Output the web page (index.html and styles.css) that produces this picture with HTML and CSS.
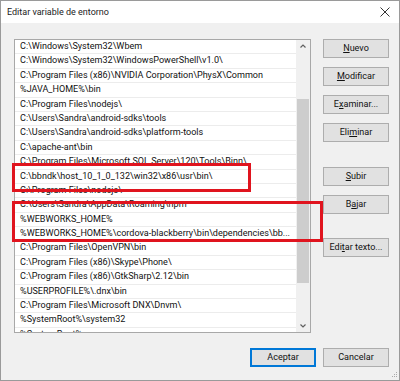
FILE: index.html
```html
<!DOCTYPE html>
<html lang="es">
<head>
<meta charset="utf-8">
<title>Editar variable de entorno</title>
<link rel="stylesheet" href="styles.css">
</head>
<body>
<div class="window">
  <div class="titlebar">
    <span class="title">Editar variable de entorno</span>
    <svg class="close" width="10" height="10" viewBox="0 0 10 10"><path d="M0.5 0.5 L9.5 9.5 M9.5 0.5 L0.5 9.5" stroke="#333" stroke-width="1" fill="none"/></svg>
  </div>
  <div class="content">
    <div class="main">
      <div class="list">
        <div class="rows">
          <div class="row">C:\Windows\System32\Wbem</div>
          <div class="row">C:\Windows\System32\WindowsPowerShell\v1.0\</div>
          <div class="row">C:\Program Files (x86)\NVIDIA Corporation\PhysX\Common</div>
          <div class="row">%JAVA_HOME%\bin</div>
          <div class="row">C:\Program Files\nodejs\</div>
          <div class="row">C:\Users\Sandra\android-sdks\tools</div>
          <div class="row">C:\Users\Sandra\android-sdks\platform-tools</div>
          <div class="row">C:\apache-ant\bin</div>
          <div class="row">C:\Program Files\Microsoft SQL Server\120\Tools\Binn\</div>
          <div class="row">C:\bbndk\host_10_1_0_132\win32\x86\usr\bin\</div>
          <div class="row">C:\Program Files\nodejs\</div>
          <div class="row">C:\Users\Sandra\AppData\Roaming\npm</div>
          <div class="row">%WEBWORKS_HOME%</div>
          <div class="row">%WEBWORKS_HOME%\cordova-blackberry\bin\dependencies\bb...</div>
          <div class="row">C:\Program Files\OpenVPN\bin</div>
          <div class="row">C:\Program Files (x86)\Skype\Phone\</div>
          <div class="row">C:\Program Files (x86)\GtkSharp\2.12\bin</div>
          <div class="row">%USERPROFILE%\.dnx\bin</div>
          <div class="row">C:\Program Files\Microsoft DNX\Dnvm\</div>
          <div class="row">%SystemRoot%\system32</div>
          <div class="row">%SystemRoot%</div>
        </div>
        <div class="scrollbar">
          <svg class="arrow" width="14" height="12" viewBox="0 0 14 12"><path d="M4.5 7.5 L7 5 L9.5 7.5" stroke="#606060" stroke-width="1.2" fill="none"/></svg>
          <div class="track"><div class="thumb"></div></div>
          <svg class="arrow" width="14" height="12" viewBox="0 0 14 12"><path d="M4.5 4.5 L7 7 L9.5 4.5" stroke="#606060" stroke-width="1.2" fill="none"/></svg>
        </div>
        <div class="mark mark1"></div>
        <div class="mark mark2"></div>
      </div>
      <div class="side">
        <button class="btn"><u>N</u>uevo</button>
        <button class="btn"><u>M</u>odificar</button>
        <button class="btn">E<u>x</u>aminar...</button>
        <button class="btn">Eli<u>m</u>inar</button>
        <button class="btn gap-lg"><u>S</u>ubir</button>
        <button class="btn">B<u>a</u>jar</button>
        <button class="btn gap-md">Edi<u>t</u>ar texto...</button>
      </div>
    </div>
    <div class="footer">
      <button class="btn default">Aceptar</button>
      <button class="btn">Cancelar</button>
    </div>
  </div>
  <svg class="grip" width="8" height="8" viewBox="0 0 8 8"><rect x="6" y="2" width="1" height="1" fill="#aaa"/><rect x="4" y="4" width="1" height="1" fill="#aaa"/><rect x="6" y="4" width="1" height="1" fill="#aaa"/><rect x="2" y="6" width="1" height="1" fill="#aaa"/><rect x="4" y="6" width="1" height="1" fill="#aaa"/><rect x="6" y="6" width="1" height="1" fill="#aaa"/></svg>
</div>
</body>
</html>
```
FILE: styles.css
```css
* { box-sizing: border-box; }
html, body { margin: 0; padding: 0; }
body {
  width: 400px;
  height: 381px;
  overflow: hidden;
  font-family: Roboto, "Noto Sans", sans-serif;
  font-size: 9.05px;
  color: #111;
  background: #fff;
}
.window {
  position: relative;
  width: 400px;
  height: 381px;
  border: 1px solid #9a9a9a;
  display: flex;
  flex-direction: column;
  background: #f0f0f0;
}
.titlebar {
  height: 22px;
  background: #fff;
  display: flex;
  align-items: center;
  justify-content: space-between;
  padding: 0 9px 0 6px;
  flex: none;
}
.title { font-size: 9px; color: #222; }
.close { display: block; }
.content {
  flex: 1;
  display: flex;
  flex-direction: column;
  padding: 16px 10px 0 13px;
}
.main { display: flex; gap: 12px; }
.list {
  position: relative;
  width: 298px;
  height: 294px;
  border: 1px solid #a8a8a8;
  background: #fff;
  display: flex;
}
.rows { flex: 1; overflow: hidden; height: 292px; }
.row {
  height: 14.4px;
  line-height: 13.4px;
  padding-left: 5px;
  border-bottom: 1px solid #ececec;
  white-space: nowrap;
  overflow: hidden;
}
.scrollbar {
  width: 14px;
  background: #f0f0f0;
  display: flex;
  flex-direction: column;
  flex: none;
}
.arrow { display: block; flex: none; }
.track { flex: 1; padding-top: 47px; padding-bottom: 37px; display: flex; }
.thumb { flex: 1; margin: 0 1px; background: #cdcdcd; }
.mark {
  position: absolute;
  border: 3px solid #e0141e;
}
.mark1 { left: -3px; top: 123px; width: 239px; height: 29px; }
.mark2 { left: -3px; top: 161px; width: 311px; height: 41px; }
.side {
  display: flex;
  flex-direction: column;
  gap: 9px;
}
.btn {
  width: 66px;
  height: 19px;
  padding: 0;
  background: #e1e1e1;
  border: 1px solid #adadad;
  font-family: inherit;
  font-size: 9.05px;
  color: #111;
  line-height: 17px;
  white-space: nowrap;
}
.btn u { text-decoration-thickness: 1px; text-underline-offset: 1px; }
.gap-lg { margin-top: 16px; }
.gap-md { margin-top: 15px; }
.footer {
  display: flex;
  justify-content: flex-end;
  gap: 7px;
  margin-top: 15px;
}
.default { border: 1px solid #0078d7; box-shadow: inset 0 0 0 1px #0078d7; }
.grip { position: absolute; right: 1px; bottom: 2px; }
```
